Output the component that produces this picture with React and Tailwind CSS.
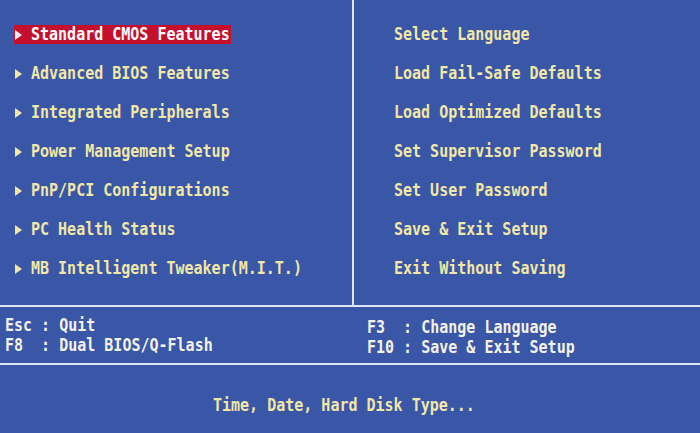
import React from "react";

const left = [
  "Standard CMOS Features",
  "Advanced BIOS Features",
  "Integrated Peripherals",
  "Power Management Setup",
  "PnP/PCI Configurations",
  "PC Health Status",
  "MB Intelligent Tweaker(M.I.T.)",
];
const right = [
  "Select Language",
  "Load Fail-Safe Defaults",
  "Load Optimized Defaults",
  "Set Supervisor Password",
  "Set User Password",
  "Save & Exit Setup",
  "Exit Without Saving",
];

function Arrow({ color }) {
  return (
    <svg width="7" height="10" viewBox="0 0 7 10" className="shrink-0">
      <polygon points="0,0 7,5 0,10" fill={color} />
    </svg>
  );
}

function T({ children }) {
  return <span className="inline-block whitespace-pre scale-y-[1.15]">{children}</span>;
}

export default function App() {
  const font = { fontFamily: '"DejaVu Sans Mono", "Liberation Mono", monospace' };
  return (
    <div
      className="w-[700px] h-[433px] bg-[#3a56a6] overflow-hidden flex flex-col font-bold text-[15px] leading-none"
      style={font}
    >
      {/* top */}
      <div className="flex h-[305px]">
        <div className="w-[352px] pt-[15px] pl-[14px] flex flex-col">
          {left.map((t, i) => (
            <div key={t} className="h-[39px] flex items-center">
              {i === 0 ? (
                <div className="h-[19px] w-[217px] bg-[#c4102c] flex items-center pl-[1px] text-white">
                  <Arrow color="#f4eef4" />
                  <span className="ml-[9px]"><T>{t}</T></span>
                </div>
              ) : (
                <div className="flex items-center pl-[1px] text-[#f1e7a6]">
                  <Arrow color="#f1e7a6" />
                  <span className="ml-[9px]"><T>{t}</T></span>
                </div>
              )}
            </div>
          ))}
        </div>
        <div className="w-[2px] bg-[#dfe6fa]" />
        <div className="flex-1 pt-[15px] pl-[40px] flex flex-col">
          {right.map((t) => (
            <div key={t} className="h-[39px] flex items-center text-[#f1e7a6]">
              <T>{t}</T>
            </div>
          ))}
        </div>
      </div>
      <div className="h-[2px] bg-[#dfe6fa]" />
      {/* keys */}
      <div className="h-[56px] flex">
        <div className="w-[362px] pl-[5px] pt-[11px] flex flex-col gap-[5px] text-[#f4f2e8]">
          <div className="h-[15px] flex items-center"><T>Esc : Quit</T></div>
          <div className="h-[15px] flex items-center"><T>F8  : Dual BIOS/Q-Flash</T></div>
        </div>
        <div className="flex-1 pl-[5px] pt-[13px] flex flex-col gap-[5px] text-[#f4f2e8]">
          <div className="h-[15px] flex items-center"><T>F3  : Change Language</T></div>
          <div className="h-[15px] flex items-center"><T>F10 : Save & Exit Setup</T></div>
        </div>
      </div>
      <div className="h-[2px] bg-[#dfe6fa]" />
      <div className="flex-1 pl-[213px] pt-[33px] text-[#f1e7a6]">
        <div className="h-[15px] flex items-center"><T>Time, Date, Hard Disk Type...</T></div>
      </div>
    </div>
  );
}
